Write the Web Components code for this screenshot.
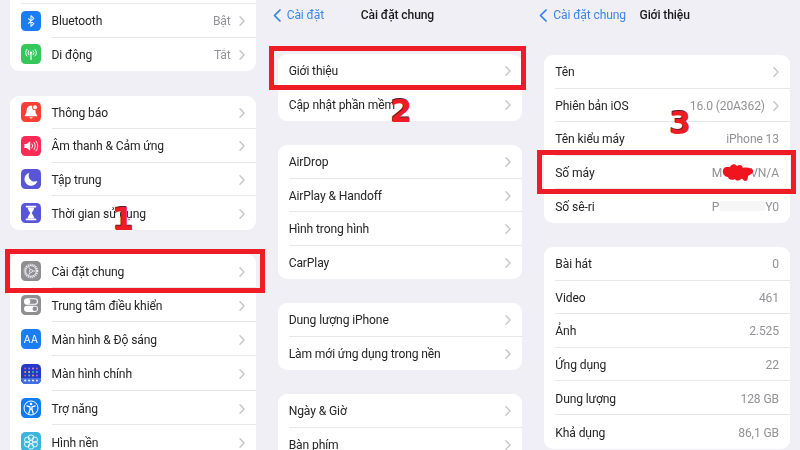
<!DOCTYPE html>
<html lang="vi">
<head>
<meta charset="utf-8">
<title>Cài đặt chung</title>
<style>
  html, body { margin: 0; height: 100%; background: #efeff5; overflow: hidden; }
</style>
</head>
<body>
<guide-frame>
  <settings-panel style="--gap:24.5px;padding-left:10px">
    <settings-card style="margin-top:-30px">
      <settings-row height="34" label="" chevron="no"></settings-row>
      <settings-row label="Bluetooth" value="Bật"><row-icon slot="icon" kind="bluetooth"></row-icon></settings-row>
      <settings-row label="Di động" value="Tắt"><row-icon slot="icon" kind="cellular"></row-icon></settings-row>
    </settings-card>
    <settings-card>
      <settings-row label="Thông báo"><row-icon slot="icon" kind="bell"></row-icon></settings-row>
      <settings-row label="Âm thanh &amp; Cảm ứng"><row-icon slot="icon" kind="sound"></row-icon></settings-row>
      <settings-row label="Tập trung"><row-icon slot="icon" kind="moon"></row-icon></settings-row>
      <settings-row label="Thời gian sử dụng"><row-icon slot="icon" kind="hourglass"></row-icon></settings-row>
    </settings-card>
    <settings-card>
      <settings-row label="Cài đặt chung" height="34"><row-icon slot="icon" kind="gear"></row-icon></settings-row>
      <settings-row label="Trung tâm điều khiển" height="34"><row-icon slot="icon" kind="toggles"></row-icon></settings-row>
      <settings-row label="Màn hình &amp; Độ sáng" height="34"><row-icon slot="icon" kind="display"></row-icon></settings-row>
      <settings-row label="Màn hình chính" height="35"><row-icon slot="icon" kind="home"></row-icon></settings-row>
      <settings-row label="Trợ năng" height="34"><row-icon slot="icon" kind="access"></row-icon></settings-row>
      <settings-row label="Hình nền" height="34"><row-icon slot="icon" kind="flower"></row-icon></settings-row>
    </settings-card>
  </settings-panel>

  <settings-panel>
    <nav-bar back="Cài đặt" title="Cài đặt chung"></nav-bar>
    <settings-card>
      <settings-row label="Giới thiệu"></settings-row>
      <settings-row label="Cập nhật phần mềm"></settings-row>
    </settings-card>
    <settings-card>
      <settings-row label="AirDrop"></settings-row>
      <settings-row label="AirPlay &amp; Handoff"></settings-row>
      <settings-row label="Hình trong hình"></settings-row>
      <settings-row label="CarPlay"></settings-row>
    </settings-card>
    <settings-card>
      <settings-row label="Dung lượng iPhone"></settings-row>
      <settings-row label="Làm mới ứng dụng trong nền"></settings-row>
    </settings-card>
    <settings-card>
      <settings-row label="Ngày &amp; Giờ"></settings-row>
      <settings-row label="Bàn phím"></settings-row>
    </settings-card>
  </settings-panel>

  <settings-panel style="padding-right:10px">
    <nav-bar back="Cài đặt chung" title="Giới thiệu" style="margin-bottom:1px"></nav-bar>
    <settings-card>
      <settings-row label="Tên" height="33.6"></settings-row>
      <settings-row label="Phiên bản iOS" value="16.0 (20A362)" height="33.6"></settings-row>
      <settings-row label="Tên kiểu máy" value="iPhone 13" chevron="no" height="33.6"></settings-row>
      <settings-row label="Số máy" chevron="no" height="33.6"><span slot="value">M<span style="display:inline-block;width:28px"></span>VN/A</span></settings-row>
      <settings-row label="Số sê-ri" chevron="no" height="33.6"><span slot="value">P<span style="display:inline-block;width:46px;height:10px;background:#f6f6f7;border-radius:3px"></span>Y0</span></settings-row>
    </settings-card>
    <settings-card>
      <settings-row label="Bài hát" value="0" chevron="no" height="33.6"></settings-row>
      <settings-row label="Video" value="461" chevron="no" height="33.6"></settings-row>
      <settings-row label="Ảnh" value="2.525" chevron="no" height="33.6"></settings-row>
      <settings-row label="Ứng dụng" value="22" chevron="no" height="33.6"></settings-row>
      <settings-row label="Dung lượng" value="128 GB" chevron="no" height="33.6"></settings-row>
      <settings-row label="Khả dụng" value="86,1 GB" chevron="no" height="33.6"></settings-row>
    </settings-card>
  </settings-panel>

  <mark-box slot="marks" style="left:5px;top:249px;width:260px;height:44px"></mark-box>
  <mark-box slot="marks" style="left:269px;top:46px;width:257px;height:44px"></mark-box>
  <mark-box slot="marks" style="left:537px;top:150px;width:259px;height:44px"></mark-box>
  <step-number slot="marks" style="left:112px;top:200px">1</step-number>
  <step-number slot="marks" style="left:390px;top:92px">2</step-number>
  <step-number slot="marks" style="left:669px;top:104px">3</step-number>
  <scribble-mark slot="marks" style="left:721px;top:162px"></scribble-mark>
</guide-frame>

<script>
class GuideFrame extends HTMLElement {
  constructor() {
    super();
    this.attachShadow({ mode: "open" });
    this.shadowRoot.innerHTML = `
      <style>
        :host { display: block; position: relative; width: 800px; height: 450px; overflow: hidden;
                font-family: Roboto, "Noto Sans", sans-serif; }
        .panels { display: flex; width: 800px; height: 450px; filter: blur(.35px); }
      </style>
      <div class="panels"><slot></slot></div>
      <slot name="marks"></slot>`;
  }
}

class SettingsPanel extends HTMLElement {
  constructor() {
    super();
    this.attachShadow({ mode: "open" });
    this.shadowRoot.innerHTML = `
      <style>
        :host { display: flex; flex-direction: column; gap: var(--gap, 24px); box-sizing: border-box;
                flex: 0 0 266.67px; height: 450px; padding: 0 11px; background: #efeff5; overflow: hidden; }
      </style>
      <slot></slot>`;
  }
}

class NavBar extends HTMLElement {
  constructor() {
    super();
    this.attachShadow({ mode: "open" });
    this.shadowRoot.innerHTML = `
      <style>
        :host { display: grid; grid-template-columns: 1fr auto 1fr; align-items: center; flex: none;
                height: 30px; margin-left: -5px; font-size: 12.1px; letter-spacing: -.12px; }
        .back { display: flex; align-items: center; gap: 6px; color: #3c86e6; white-space: nowrap; }
        .title { font-weight: 500; color: #1c1c1e; white-space: nowrap; }
        svg { display: block; flex: none; }
      </style>
      <div class="back">
        <svg width="8" height="13" viewBox="0 0 8 13"><path d="M7 1 1.5 6.5 7 12" fill="none" stroke="#2f80ea" stroke-width="1.7" stroke-linecap="round" stroke-linejoin="round"/></svg>
        <span id="back"></span>
      </div>
      <div class="title" id="title"></div>`;
    this.shadowRoot.getElementById("back").textContent = this.getAttribute("back");
    this.shadowRoot.getElementById("title").textContent = this.getAttribute("title");
  }
}

class SettingsCard extends HTMLElement {
  constructor() {
    super();
    this.attachShadow({ mode: "open" });
    this.shadowRoot.innerHTML = `
      <style>
        :host { display: block; flex: none; background: #fff; border-radius: 9px; overflow: hidden; }
      </style>
      <slot></slot>`;
  }
}

class SettingsRow extends HTMLElement {
  constructor() {
    super();
    this.attachShadow({ mode: "open" });
    this.shadowRoot.innerHTML = `
      <style>
        :host { display: flex; align-items: stretch; padding-left: 11px; height: 33.5px;
                font-size: 12.1px; letter-spacing: -.12px; color: #242426; }
        .icon { display: flex; align-items: center; }
        ::slotted(row-icon) { margin-right: 10.5px; }
        .body { flex: 1; min-width: 0; display: flex; align-items: center; padding: 2px 11px 0 0;
                border-bottom: 1px solid #e7e7ea; white-space: nowrap; }
        :host(:last-child) .body { border-bottom: 0; }
        .value { margin-left: auto; color: #929296; }
        svg { display: block; flex: none; margin-left: 8px; }
        .label { flex: none; }
      </style>
      <div class="icon"><slot name="icon"></slot></div>
      <div class="body">
        <span class="label" id="label"></span>
        <span class="value"><slot name="value"><span id="value"></span></slot></span>
        <svg id="chev" width="6" height="10" viewBox="0 0 6 10"><path d="M1 .8 5 5 1 9.2" fill="none" stroke="#c5c5c8" stroke-width="1.4" stroke-linecap="round" stroke-linejoin="round"/></svg>
      </div>`;
    const s = this.shadowRoot;
    s.getElementById("label").textContent = this.getAttribute("label");
    s.getElementById("value").textContent = this.getAttribute("value") || "";
    if (this.getAttribute("chevron") === "no") s.getElementById("chev").style.display = "none";
    if (this.hasAttribute("height")) this.style.height = this.getAttribute("height") + "px";
  }
}

const ICONS = {
  bluetooth: `<rect width="20" height="20" rx="4.5" fill="#1a7df5"/>
    <path d="M7.2 7.400 12.800 12.700 10 15.400V4.600l2.800 2.700-5.600 5.300" fill="none" stroke="#fff" stroke-width="1.1" stroke-linejoin="round" opacity=".9"/>`,
  cellular: `<rect width="20" height="20" rx="4.5" fill="#35c75a"/>
    <circle cx="10" cy="8.600" r="1.200" fill="#fff"/><path d="M10 9v6.500" stroke="#fff" stroke-width="1.200" stroke-linecap="round"/>
    <path d="M7.800 6.600a3.200 3.200 0 0 0 0 4.200M12.200 6.600a3.200 3.200 0 0 1 0 4.200M6 5.300a5.200 5.200 0 0 0 0 6.800M14 5.300a5.200 5.200 0 0 1 0 6.800" fill="none" stroke="#fff" stroke-width="1" stroke-linecap="round"/>`,
  bell: `<rect width="20" height="20" rx="4.5" fill="#fb3f34"/>
    <path d="M10 3.6a4.6 4.6 0 0 0-4.4 4.7c0 3-1 3.9-1.9 5.2-.2.4 0 .7.4.7h11.8c.4 0 .6-.3.4-.7-.9-1.3-1.9-2.2-1.9-5.2a4.6 4.6 0 0 0-4.4-4.7Z" fill="#fff"/>
    <path d="M8.2 15.2a1.900 1.900 0 0 0 3.600 0Z" fill="#fff"/>
    <circle cx="14" cy="5.200" r="2.900" fill="#fb3f34"/><circle cx="14" cy="5.200" r="2" fill="#fff"/>`,
  sound: `<rect width="20" height="20" rx="4.5" fill="#fb2b56"/>
    <path d="M3.400 8h2.200l3.600-2.800v9.600L5.600 12H3.400Z" fill="#fff"/>
    <path d="M11 8a3 3 0 0 1 0 4M13 6.400a5.400 5.400 0 0 1 0 7.200M15 5a7.600 7.600 0 0 1 0 10" fill="none" stroke="#fff" stroke-width="1" stroke-linecap="round" opacity=".9"/>`,
  moon: `<rect width="20" height="20" rx="4.5" fill="#5856d6"/>
    <path d="M8.400 3.800a6.600 6.600 0 1 0 8 8.300c-.9.3-1.700.4-2.600.4-3.500 0-6.100-2.700-6.100-6.100 0-.9.2-1.800.7-2.600Z" fill="#fff"/>`,
  hourglass: `<rect width="20" height="20" rx="4.5" fill="#5856d6"/>
    <path d="M5.500 3.600h9M5.500 16.400h9" stroke="#fff" stroke-width="1.700" stroke-linecap="round"/>
    <path d="M6.700 4.500h6.600c0 2.400-1.800 3.600-2.600 5.500.8 1.900 2.600 3.100 2.600 5.500H6.700c0-2.400 1.800-3.600 2.600-5.500-.8-1.900-2.600-3.100-2.600-5.500Z" fill="#fff"/>`,
  gear: `<rect width="20" height="20" rx="4.500" fill="#8e8e93"/>
    <circle cx="10" cy="10" r="6.400" fill="none" stroke="#eee" stroke-width="1.800" stroke-dasharray="1.100 .9"/>
    <circle cx="10" cy="10" r="5.300" fill="none" stroke="#f2f2f2" stroke-width=".9"/>
    <path d="M10 10 14.500 10M10 10 7.800 6.100M10 10 7.800 13.900" stroke="#f2f2f2" stroke-width=".9"/>
    <circle cx="10" cy="10" r="1.500" fill="#8e8e93" stroke="#f2f2f2" stroke-width=".8"/>`,
  toggles: `<rect width="20" height="20" rx="4.500" fill="#8e8e93"/>
    <rect x="3.500" y="3.700" width="13" height="5.600" rx="2.800" fill="none" stroke="#fff" stroke-width="1.100"/>
    <circle cx="6.500" cy="6.500" r="2.800" fill="#fff"/>
    <rect x="3" y="10.700" width="14" height="6.200" rx="3.100" fill="#fff"/>
    <circle cx="13.800" cy="13.800" r="2.300" fill="#8e8e93"/>`,
  display: `<rect width="20" height="20" rx="4.500" fill="#1a7df5"/>
    <text x="10" y="14" text-anchor="middle" font-family="Inter, sans-serif" font-size="10" font-weight="400" fill="#fff" letter-spacing=".2">AA</text>`,
  home: `<rect width="20" height="20" rx="4.500" fill="#2239c9"/>
    <rect y="14" width="20" height="6" fill="#3f6fe0" clip-path="inset(0 0 0 0 round 0 0 4.500px 4.500px)"/>
    <circle cx="4.200" cy="4.500" r="1" fill="#d5547c"/><circle cx="8.100" cy="4.500" r="1" fill="#8e7fe8"/><circle cx="12" cy="4.500" r="1" fill="#e78aa5"/><circle cx="15.900" cy="4.500" r="1" fill="#e05e6f"/>
    <circle cx="4.200" cy="8" r="1" fill="#f0a03c"/><circle cx="8.100" cy="8" r="1" fill="#f3d24a"/><circle cx="12" cy="8" r="1" fill="#45c46b"/><circle cx="15.900" cy="8" r="1" fill="#48b5e8"/>
    <circle cx="4.200" cy="11.500" r="1" fill="#e8584c"/><circle cx="8.100" cy="11.500" r="1" fill="#4fd08c"/><circle cx="12" cy="11.500" r="1" fill="#f2a45a"/><circle cx="15.900" cy="11.500" r="1" fill="#c05de0"/>
    <circle cx="4.200" cy="16.500" r="1.100" fill="#e9f0ff"/><circle cx="8.100" cy="16.500" r="1.100" fill="#d9f2e8"/><circle cx="12" cy="16.500" r="1.100" fill="#ffe3c9"/><circle cx="15.900" cy="16.500" r="1.100" fill="#f7d5dd"/>`,
  access: `<rect width="20" height="20" rx="4.500" fill="#0f7cf5"/>
    <circle cx="10" cy="10" r="7" fill="none" stroke="#fff" stroke-width="1"/>
    <circle cx="10" cy="6" r="1.300" fill="#fff"/>
    <path d="M5.800 7.900 9 8.900v2.600L7.800 15.300M14.200 7.900 11 8.900v2.600l1.200 3.800M9 11.200h2" fill="none" stroke="#fff" stroke-width="1.300" stroke-linecap="round" stroke-linejoin="round"/>`,
  flower: `<rect width="20" height="20" rx="4.500" fill="#3cb5de"/>
    <g fill="none" stroke="#fff" stroke-width=".9" opacity=".95">
      <circle cx="10" cy="5.700" r="2.800"/><circle cx="10" cy="14.300" r="2.800"/>
      <circle cx="6.300" cy="7.850" r="2.800"/><circle cx="13.700" cy="7.850" r="2.800"/>
      <circle cx="6.300" cy="12.150" r="2.800"/><circle cx="13.700" cy="12.150" r="2.800"/>
    </g>`
};

class RowIcon extends HTMLElement {
  constructor() {
    super();
    this.attachShadow({ mode: "open" });
    this.shadowRoot.innerHTML = `
      <style>
        :host { display: block; flex: none; width: 20px; height: 20px; }
        svg { display: block; }
      </style>
      <svg width="20" height="20" viewBox="0 0 20 20">${ICONS[this.getAttribute("kind")] || ""}</svg>`;
  }
}

class MarkBox extends HTMLElement {
  constructor() {
    super();
    this.attachShadow({ mode: "open" });
    this.shadowRoot.innerHTML = `
      <style>
        :host { display: block; position: absolute; box-sizing: border-box; border: 5px solid #ee1c25; }
      </style>`;
  }
}

class StepNumber extends HTMLElement {
  constructor() {
    super();
    this.attachShadow({ mode: "open" });
    this.shadowRoot.innerHTML = `
      <style>
        :host { display: block; position: absolute; font: 700 32px/38px "DejaVu Sans", sans-serif;
                color: #ee1c25; text-shadow: -.6px -.6px 0 #5a1a30; }
      </style>
      <slot></slot>`;
  }
}

class ScribbleMark extends HTMLElement {
  constructor() {
    super();
    this.attachShadow({ mode: "open" });
    this.shadowRoot.innerHTML = `
      <style>
        :host { display: block; position: absolute; width: 34px; height: 22px; }
        svg { display: block; }
      </style>
      <svg width="34" height="22" viewBox="0 0 34 22">
        <path d="M2 8C3 4 7 5 9 5c1-3 5-4 7-1 3-2 5-1 6 2 3-1 9 0 10 2 1 3-2 4-5 6 0 3-1 5-3 5-2 0-2-3-4-2-2 2-5 2-6 0-3 2-7 0-7-2-3 0-6-3-5-7Z" fill="#f0141e"/>
      </svg>`;
  }
}

customElements.define("guide-frame", GuideFrame);
customElements.define("settings-panel", SettingsPanel);
customElements.define("nav-bar", NavBar);
customElements.define("settings-card", SettingsCard);
customElements.define("settings-row", SettingsRow);
customElements.define("row-icon", RowIcon);
customElements.define("mark-box", MarkBox);
customElements.define("step-number", StepNumber);
customElements.define("scribble-mark", ScribbleMark);
</script>
</body>
</html>
